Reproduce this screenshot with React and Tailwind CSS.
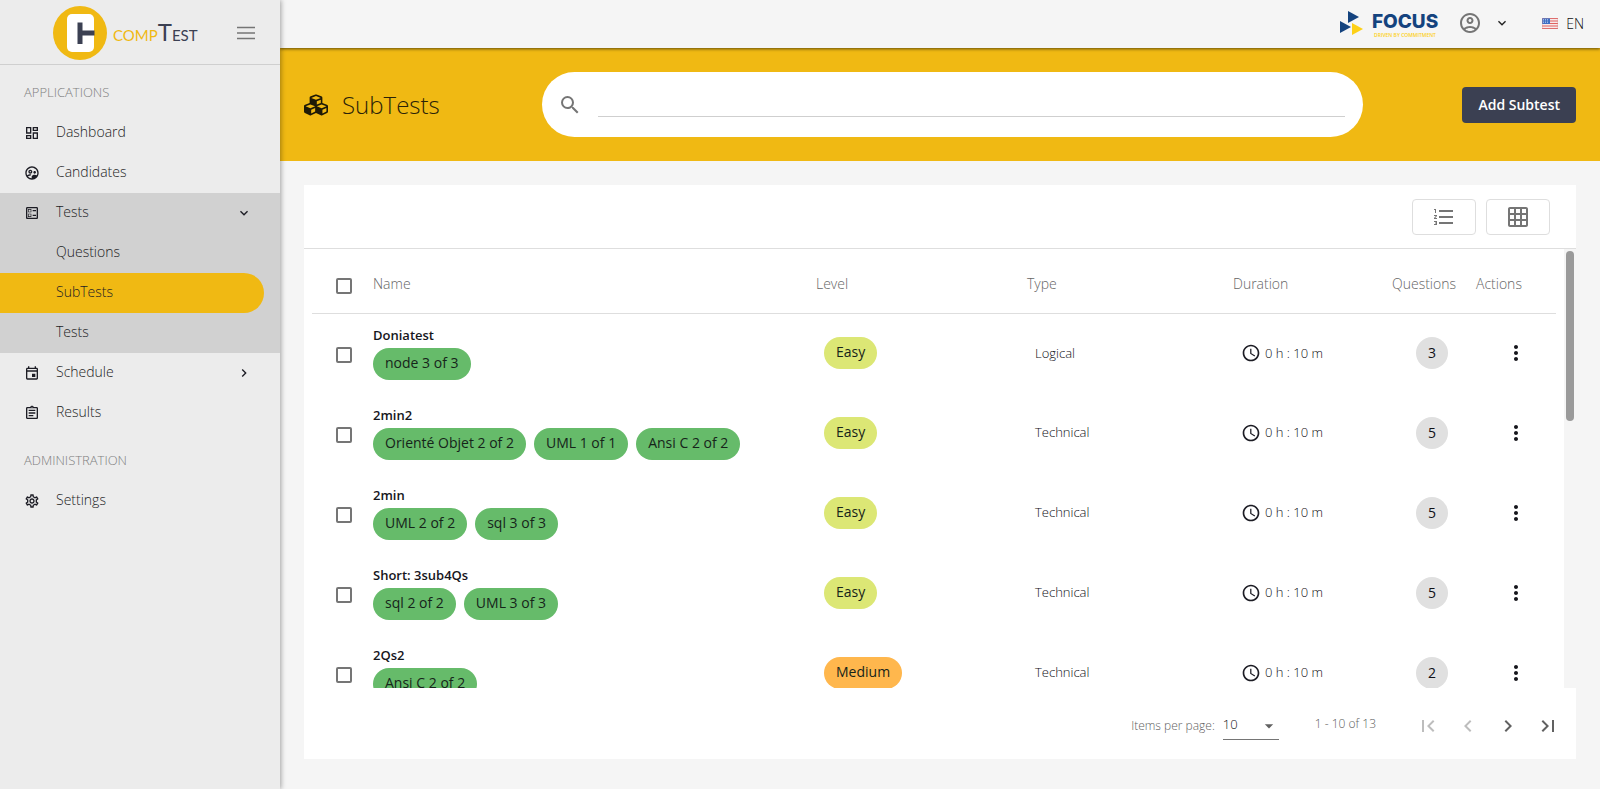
import {
  MdAccessTime,
  MdArrowDropDown,
  MdChevronLeft,
  MdChevronRight,
  MdFirstPage,
  MdFormatListNumbered,
  MdGridOn,
  MdKeyboardArrowDown,
  MdKeyboardArrowRight,
  MdLastPage,
  MdMoreVert,
  MdOutlineAccountCircle,
  MdOutlineAssignment,
  MdOutlineBallot,
  MdOutlineDashboard,
  MdOutlineEvent,
  MdOutlineSettings,
  MdOutlineSupervisedUserCircle,
  MdSearch,
} from 'react-icons/md';
import { FaCubes } from 'react-icons/fa';

const ROWS = [
  { name: 'Doniatest', tags: ['node 3 of 3'], level: 'Easy', type: 'Logical', questions: 3 },
  { name: '2min2', tags: ['Orienté Objet 2 of 2', 'UML 1 of 1', 'Ansi C 2 of 2'], level: 'Easy', type: 'Technical', questions: 5 },
  { name: '2min', tags: ['UML 2 of 2', 'sql 3 of 3'], level: 'Easy', type: 'Technical', questions: 5 },
  { name: 'Short: 3sub4Qs', tags: ['sql 2 of 2', 'UML 3 of 3'], level: 'Easy', type: 'Technical', questions: 5 },
  { name: '2Qs2', tags: ['Ansi C 2 of 2'], level: 'Medium', type: 'Technical', questions: 2 },
];

const LEVEL_COLORS = { Easy: 'bg-[#dce775]', Medium: 'bg-[#ffb74d]' };

function CompTestLogo() {
  return (
    <a href="#home" className="flex items-center gap-1.5" aria-label="compTest home">
      <svg viewBox="0 0 54 54" className="size-[54px]" aria-hidden="true">
        <circle cx="27" cy="27" r="27" fill="#f0b913" />
        <rect x="14" y="8" width="27" height="38" rx="5" fill="#fff" />
        <path d="M24.500 16.500h5v8h12v5h-12v8.500h-5z" fill="#3b4052" />
      </svg>
      <span className="font-[Lato,sans-serif] text-[15px] leading-6 font-normal text-[#3b4052]">
        <span className="text-[#f0b913]">COMP</span>
        <span className="text-[24px]">T</span>EST
      </span>
    </a>
  );
}

function FocusLogo() {
  return (
    <a href="#focus" className="flex items-center gap-2" aria-label="Focus">
      <svg viewBox="0 0 24 25" className="h-[25px] w-6" aria-hidden="true">
        <path d="M8 0l11 6-11 6z" fill="#14437e" />
        <path d="M0 10l11 6-11 6z" fill="#14437e" />
        <path d="M12 12l11 6-11 6z" fill="#fdd017" />
      </svg>
      <span className="flex flex-col items-center pt-1">
        <span className="font-[Inter,sans-serif] text-[19px] leading-5 font-extrabold text-[#14437e]">FOCUS</span>
        <span className="text-[5px] leading-[6px] font-semibold text-[#fdd017]">DRIVEN BY COMMITMENT</span>
      </span>
    </a>
  );
}

function UsFlag() {
  return (
    <svg viewBox="0 0 16 11" className="h-[11px] w-4" aria-hidden="true">
      <rect width="16" height="11" fill="#f7e9ea" />
      <path d="M0 .5h16M0 3h16M0 5.500h16M0 8h16M0 10.500h16" stroke="#e0625f" strokeWidth="1.1" />
      <rect width="8" height="6" fill="#3f6fc4" />
      <path d="M1 1.500h6M1 3h6M1 4.500h6" stroke="#c9d7f2" strokeWidth=".7" strokeDasharray="1 1" />
      <path d="M0 0h16v11H0z" fill="none" stroke="#d98f90" strokeWidth=".6" />
    </svg>
  );
}

function NavItem({ icon: Icon, trail: Trail, active, children }) {
  return (
    <a
      href={`#${String(children).toLowerCase()}`}
      className={`flex h-10 items-center pl-6 text-[14px] ${active ? 'mr-4 rounded-r-full bg-[#f0b913]' : 'pr-7'}`}
    >
      <span className="w-8 shrink-0">{Icon && <Icon className="size-4" />}</span>
      <span className="flex-1 pb-1">{children}</span>
      {Trail && <Trail className="size-4" />}
    </a>
  );
}

function NavHeading({ children }) {
  return <h2 className="flex h-12 items-center px-6 pt-2 text-[13px] text-[#808080]">{children}</h2>;
}

function Sidebar() {
  return (
    <aside className="z-20 flex w-[280px] shrink-0 flex-col bg-[#ececec] shadow-[1px_0_5px_rgba(0,0,0,0.35)]">
      <div className="flex h-[65px] shrink-0 items-center justify-between border-b border-[#cfcfcf] pt-0.5 pr-[22px] pl-[53px]">
        <CompTestLogo />
        <button type="button" aria-label="Toggle menu" className="text-[#757575]">
          <svg viewBox="0 0 24 24" className="size-6" fill="none" stroke="currentColor" strokeWidth="1.6" aria-hidden="true">
            <path d="M3 6.500h18M3 12h18M3 17.500h18" />
          </svg>
        </button>
      </div>
      <nav className="text-[#1c1c24]">
        <NavHeading>APPLICATIONS</NavHeading>
        <NavItem icon={MdOutlineDashboard}>Dashboard</NavItem>
        <NavItem icon={MdOutlineSupervisedUserCircle}>Candidates</NavItem>
        <div className="bg-[#d1d1d1]">
          <NavItem icon={MdOutlineBallot} trail={MdKeyboardArrowDown}>Tests</NavItem>
          <NavItem>Questions</NavItem>
          <NavItem active>SubTests</NavItem>
          <NavItem>Tests</NavItem>
        </div>
        <NavItem icon={MdOutlineEvent} trail={MdKeyboardArrowRight}>Schedule</NavItem>
        <NavItem icon={MdOutlineAssignment}>Results</NavItem>
        <NavHeading>ADMINISTRATION</NavHeading>
        <NavItem icon={MdOutlineSettings}>Settings</NavItem>
      </nav>
    </aside>
  );
}

function TopBar() {
  return (
    <header className="z-10 flex h-12 shrink-0 items-center justify-end bg-[#f5f5f5] pr-4 pb-0.5 shadow-[0_1px_3px_rgba(0,0,0,0.6)]">
      <FocusLogo />
      <button type="button" aria-label="Account" className="ml-5 flex items-center gap-3 text-[#757575]">
        <MdOutlineAccountCircle className="size-6" />
        <MdKeyboardArrowDown className="size-4 text-[#212121]" />
      </button>
      <button type="button" className="ml-8 flex items-center gap-2 text-[14px] text-[#101010]">
        <UsFlag />
        EN
      </button>
    </header>
  );
}

function PageHeader() {
  return (
    <section className="flex h-[113px] shrink-0 items-center justify-between bg-[#f0b913] px-6">
      <h1 className="flex w-[214px] items-center gap-3.5 text-[24px] text-[#2a2208]">
        <FaCubes className="size-6 text-[#1f1a06]" />
        SubTests
      </h1>
      <div className="mx-6 flex h-[65px] min-w-0 flex-1 items-center gap-4 rounded-full bg-white pr-[18px] pl-4">
        <label htmlFor="search" className="text-[#757575]">
          <MdSearch className="size-6" />
        </label>
        <input id="search" type="text" aria-label="Search" className="h-6 min-w-0 flex-1 border-b border-[#cfcfcf] bg-transparent outline-none" />
      </div>
      <div className="flex w-[189px] justify-end">
        <button type="button" className="h-9 rounded-[4px] bg-[#3b4052] px-4 text-[14px] font-semibold text-white">
          Add Subtest
        </button>
      </div>
    </section>
  );
}

function Check({ label }) {
  return (
    <input
      type="checkbox"
      aria-label={label}
      className="block size-4 appearance-none rounded-[2px] border-2 border-[#757575] checked:bg-[#f0b913]"
    />
  );
}

function Chip({ color, children }) {
  return (
    <span className={`inline-flex h-8 items-center rounded-full px-3 pb-1 text-[14px] font-normal text-[#16241a] ${color}`}>
      {children}
    </span>
  );
}

function SubTestTable() {
  return (
    <table className="w-full table-fixed border-collapse text-left text-[13px] text-[#101016]">
      <thead>
        <tr className="h-16 border-b border-[#dedede] text-[14px] text-[#666666]">
          <th className="w-[61px] pt-2.5 pl-6 font-light"><Check label="Select all" /></th>
          <th className="pt-1.5 font-light">Name</th>
          <th className="w-[211px] pt-1.5 font-light">Level</th>
          <th className="w-[206px] pt-1.5 font-light">Type</th>
          <th className="w-[159px] pt-1.5 font-light">Duration</th>
          <th className="w-[84px] pt-1.5 font-light">Questions</th>
          <th className="w-[80px] pt-1.5 font-light">Actions</th>
        </tr>
      </thead>
      <tbody>
        {ROWS.map((row) => (
          <tr key={row.name} className="h-20">
            <td className="pt-1 pl-6"><Check label={`Select ${row.name}`} /></td>
            <td>
              <div className="pb-1 text-[13px] leading-[18px] font-semibold text-[#16161c]">{row.name}</div>
              <div className="flex gap-2">
                {row.tags.map((tag) => <Chip key={tag} color="bg-[#66bb6a]">{tag}</Chip>)}
              </div>
            </td>
            <td className="pl-2"><Chip color={LEVEL_COLORS[row.level]}>{row.level}</Chip></td>
            <td className="pl-2">{row.type}</td>
            <td className="pl-2">
              <span className="flex items-center gap-1">
                <MdAccessTime className="size-5 text-[#1c1c24]" />
                0 h : 10 m
              </span>
            </td>
            <td className="pl-6">
              <span className="flex size-8 items-center justify-center rounded-full bg-[#e0e0e0] pb-0.5 text-[14px] font-normal">
                {row.questions}
              </span>
            </td>
            <td>
              <button type="button" aria-label={`Actions for ${row.name}`} className="mx-auto flex size-6 items-center justify-center">
                <MdMoreVert className="size-6 text-[#16161c]" />
              </button>
            </td>
          </tr>
        ))}
      </tbody>
    </table>
  );
}

function Paginator() {
  return (
    <footer className="flex h-[71px] shrink-0 items-center justify-end bg-white pt-1 pr-4 text-[12px] text-[#616161]">
      <label htmlFor="page-size" className="mr-2">Items per page:</label>
      <span className="relative">
        <select
          id="page-size"
          defaultValue="10"
          className="h-7 w-14 appearance-none border-b border-[#757575] bg-transparent text-[13px] font-light text-[#101016]"
        >
          <option>10</option>
          <option>25</option>
          <option>50</option>
        </select>
        <MdArrowDropDown className="pointer-events-none absolute top-1 right-0 size-5" />
      </span>
      <span className="mr-10 ml-9 pb-1">1 - 10 of 13</span>
      <div className="flex gap-4">
        <button type="button" disabled aria-label="First page" className="text-[#bdbdbd]"><MdFirstPage className="size-6" /></button>
        <button type="button" disabled aria-label="Previous page" className="text-[#bdbdbd]"><MdChevronLeft className="size-6" /></button>
        <button type="button" aria-label="Next page"><MdChevronRight className="size-6" /></button>
        <button type="button" aria-label="Last page"><MdLastPage className="size-6" /></button>
      </div>
    </footer>
  );
}

function ViewButton({ label, icon: Icon }) {
  return (
    <button type="button" aria-label={label} className="flex h-9 w-16 items-center justify-center rounded-[4px] border border-[#dedede] text-[#757575]">
      <Icon className="size-6" />
    </button>
  );
}

export default function App() {
  return (
    <div className="flex h-screen overflow-hidden bg-[#f5f5f5] font-['Open_Sans',sans-serif] font-light">
      <Sidebar />
      <div className="flex min-w-0 flex-1 flex-col">
        <TopBar />
        <PageHeader />
        <main className="flex min-h-0 flex-1 flex-col px-6 pt-6 pb-[30px]">
          <div className="flex h-16 shrink-0 items-center justify-end gap-2.5 border-b border-[#dedede] bg-white px-[26px]">
            <ViewButton label="List view" icon={MdFormatListNumbered} />
            <ViewButton label="Grid view" icon={MdGridOn} />
          </div>
          <div className="flex min-h-0 flex-1">
            <div className="min-w-0 flex-1 overflow-hidden bg-white px-2">
              <SubTestTable />
            </div>
            <div className="w-3 shrink-0 px-0.5 pt-0.5" aria-hidden="true">
              <div className="h-[39%] rounded-full bg-[#9a9a9a]" />
            </div>
          </div>
          <Paginator />
        </main>
      </div>
    </div>
  );
}
